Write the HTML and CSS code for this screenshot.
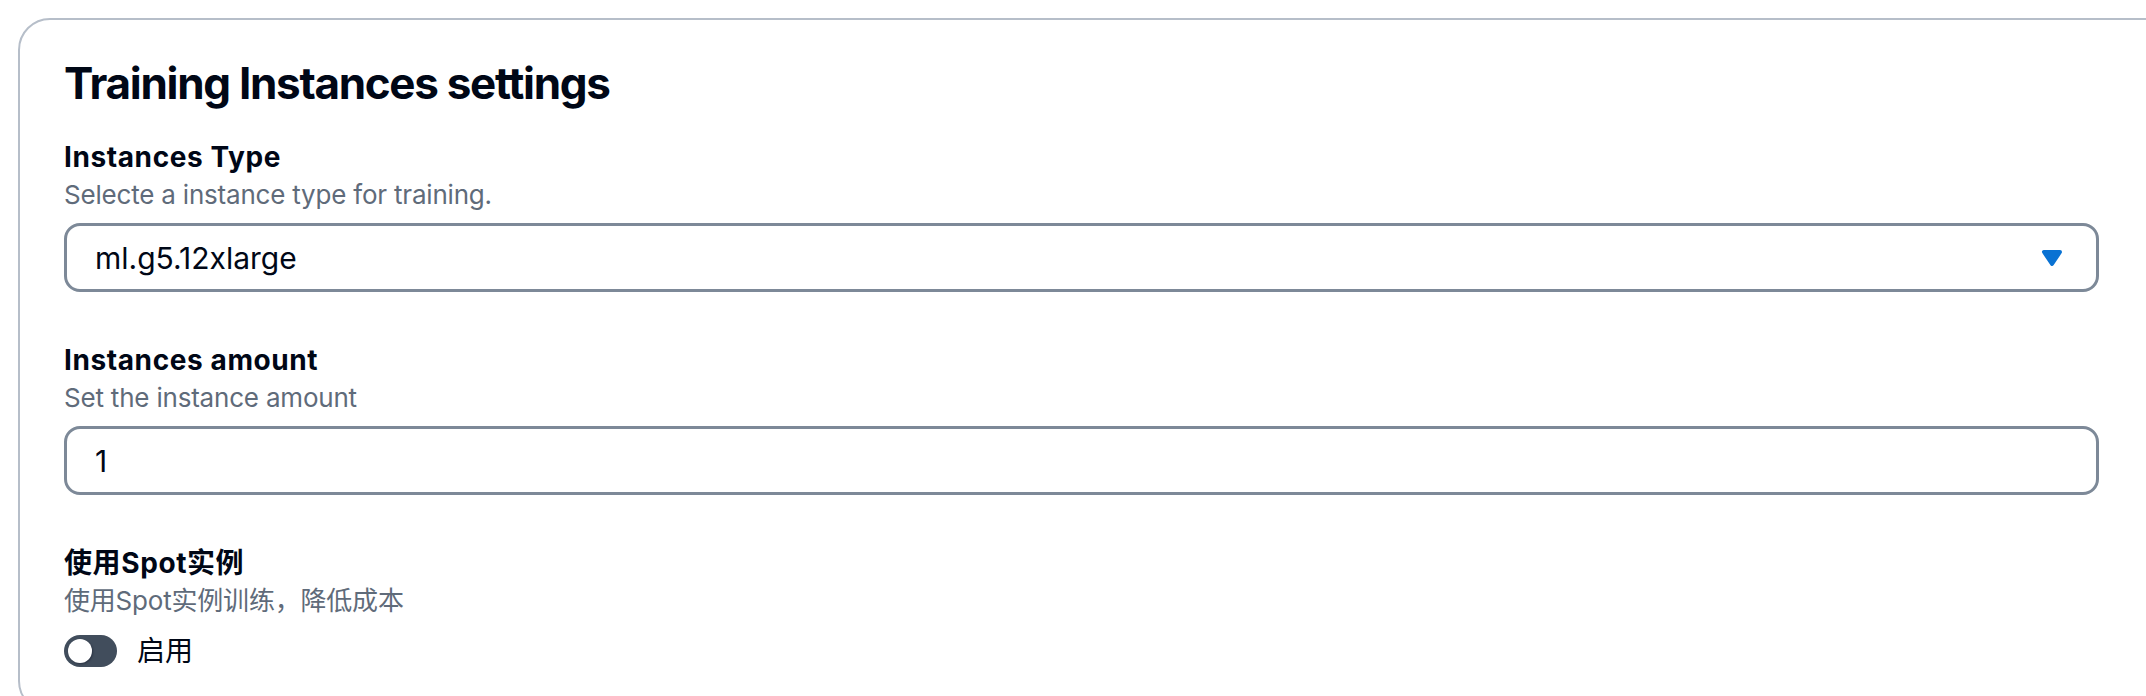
FILE: index.html
```html
<!DOCTYPE html>
<html lang="en">
<head>
    <meta charset="UTF-8">
    <title>Training Instances settings</title>
    <meta name="viewport" content="width=device-width, initial-scale=1.0">
    <link rel="stylesheet" href="styles.css">
</head>
<body>
    <div class="container">
        <h2 class="container-title">Training Instances settings</h2>

        <div class="form-field">
            <label class="field-label" for="instanceType">Instances Type</label>
            <div class="field-description">Selecte a instance type for training.</div>
            <div class="select-trigger" id="instanceType" role="button">
                <span class="select-value">ml.g5.12xlarge</span>
                <svg class="caret" viewBox="0 0 16 16" width="32" height="32" aria-hidden="true">
                    <path d="M4 5h8l-4 6-4-6z" />
                </svg>
            </div>
        </div>

        <div class="form-field">
            <label class="field-label" for="instanceAmount">Instances amount</label>
            <div class="field-description">Set the instance amount</div>
            <input class="text-input" type="text" id="instanceAmount" value="1">
        </div>

        <div class="form-field">
            <label class="field-label" for="useSpot">使用Spot实例</label>
            <div class="field-description">使用Spot实例训练，降低成本</div>
            <div class="toggle-row">
                <span class="toggle" id="useSpot"><span class="toggle-handle"></span></span>
                <span class="toggle-label">启用</span>
            </div>
        </div>
    </div>
</body>
</html>
```

FILE: styles.css
```css
body {
    font-family: Inter, "Noto Sans CJK SC", sans-serif;
    margin: 0;
    padding: 0;
    background-color: #fff;
    color: #000716;
    overflow: hidden;
}

.container {
    margin: 18px -46px 0 18px;
    padding: 37px 91px 40px 44px;
    border: 2px solid #b6bec9;
    border-radius: 32px;
    background-color: #fff;
}

.container-title {
    margin: 0;
    font-size: 44px;
    line-height: 52px;
    font-weight: 700;
    letter-spacing: -1.3px;
}

.form-field {
    margin-top: 50px;
}

.container-title + .form-field {
    margin-top: 30px;
}

.field-label {
    display: block;
    font-size: 28px;
    line-height: 36px;
    font-weight: 700;
    letter-spacing: 0.6px;
}

.field-description {
    margin-top: 4px;
    font-size: 26px;
    line-height: 32px;
    letter-spacing: -0.2px;
    color: #5f6b7a;
}

.select-trigger {
    margin-top: 12px;
    height: 69px;
    box-sizing: border-box;
    border: 3px solid #7d8998;
    border-radius: 16px;
    padding: 0 28px;
    display: flex;
    align-items: center;
    justify-content: space-between;
    font-size: 30px;
    line-height: 36px;
}

.caret {
    fill: #0972d3;
    stroke: #0972d3;
    stroke-width: 2;
    stroke-linejoin: round;
}

.text-input {
    display: block;
    margin-top: 12px;
    width: 100%;
    height: 69px;
    box-sizing: border-box;
    border: 3px solid #7d8998;
    border-radius: 16px;
    padding: 0 28px;
    font-family: inherit;
    font-size: 30px;
    color: #000716;
    background-color: #fff;
    outline: none;
}

.toggle-row {
    margin-top: 14px;
    height: 40px;
    display: flex;
    align-items: center;
    gap: 20px;
}

.toggle {
    width: 53px;
    height: 32px;
    border-radius: 16px;
    background-color: #414d5c;
    display: flex;
    align-items: center;
    padding: 0 4px;
    box-sizing: border-box;
}

.toggle-handle {
    width: 24px;
    height: 24px;
    border-radius: 50%;
    background-color: #fff;
    box-shadow: 1px 1px 2px rgba(0, 7, 22, 0.35);
}

.toggle-label {
    font-size: 28px;
    line-height: 36px;
}
```
